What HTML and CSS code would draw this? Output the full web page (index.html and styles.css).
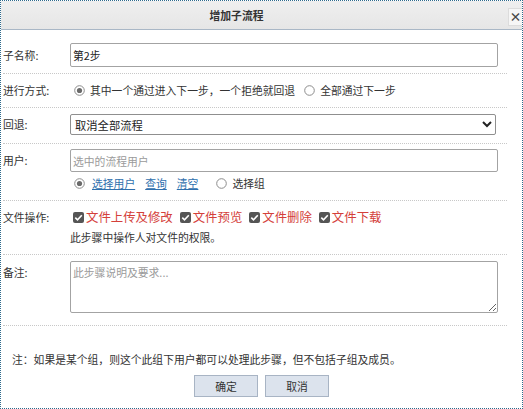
FILE: index.html
```html
<!DOCTYPE html>
<html lang="zh-CN">
<head>
<meta charset="utf-8">
<title>增加子流程</title>
<link rel="stylesheet" href="styles.css">
</head>
<body>
<div class="dialog">
  <div class="header">
    <span class="title">增加子流程</span>
    <span class="close">×</span>
  </div>
  <div class="form">
    <div class="row r1">
      <div class="label l24">子名称:</div>
      <div class="field"><input class="text" type="text" value="第2步"></div>
    </div>
    <div class="row r2">
      <div class="label l16">进行方式:</div>
      <div class="field line">
        <span class="opt"><svg class="radio" width="11" height="11" viewBox="0 0 11 11"><circle cx="5.5" cy="5.5" r="4.8" fill="#fff" stroke="#8c8c8c" stroke-width="1"/><circle cx="5.5" cy="5.5" r="2.6" fill="#6a6a6a"/></svg>其中一个通过进入下一步，一个拒绝就回退</span>
        <span class="opt"><svg class="radio" width="11" height="11" viewBox="0 0 11 11"><circle cx="5.5" cy="5.5" r="4.8" fill="#fff" stroke="#8c8c8c" stroke-width="1"/></svg>全部通过下一步</span>
      </div>
    </div>
    <div class="row r3">
      <div class="label l21">回退:</div>
      <div class="field"><select class="select"><option>取消全部流程</option></select></div>
    </div>
    <div class="row r4">
      <div class="label l23">用户:</div>
      <div class="field">
        <input class="text" type="text" placeholder="选中的流程用户">
        <div class="line sub">
          <svg class="radio first" width="11" height="11" viewBox="0 0 11 11"><circle cx="5.5" cy="5.5" r="4.8" fill="#fff" stroke="#8c8c8c" stroke-width="1"/><circle cx="5.5" cy="5.5" r="2.6" fill="#6a6a6a"/></svg>
          <a class="link" href="#">选择用户</a>
          <a class="link" href="#">查询</a>
          <a class="link" href="#">清空</a>
          <span class="opt grp"><svg class="radio" width="11" height="11" viewBox="0 0 11 11"><circle cx="5.5" cy="5.5" r="4.8" fill="#fff" stroke="#8c8c8c" stroke-width="1"/></svg>选择组</span>
        </div>
      </div>
    </div>
    <div class="row r5">
      <div class="label l16">文件操作:</div>
      <div class="field">
        <div class="line checks">
          <span class="chk"><svg class="box" width="11" height="11" viewBox="0 0 11 11"><rect x="0" y="0" width="11" height="11" rx="2" fill="#555"/><path d="M2.3 5.6 L4.5 7.8 L8.8 3.2" fill="none" stroke="#fff" stroke-width="1.6"/></svg>文件上传及修改</span>
          <span class="chk"><svg class="box" width="11" height="11" viewBox="0 0 11 11"><rect x="0" y="0" width="11" height="11" rx="2" fill="#555"/><path d="M2.3 5.6 L4.5 7.8 L8.8 3.2" fill="none" stroke="#fff" stroke-width="1.6"/></svg>文件预览</span>
          <span class="chk"><svg class="box" width="11" height="11" viewBox="0 0 11 11"><rect x="0" y="0" width="11" height="11" rx="2" fill="#555"/><path d="M2.3 5.6 L4.5 7.8 L8.8 3.2" fill="none" stroke="#fff" stroke-width="1.6"/></svg>文件删除</span>
          <span class="chk"><svg class="box" width="11" height="11" viewBox="0 0 11 11"><rect x="0" y="0" width="11" height="11" rx="2" fill="#555"/><path d="M2.3 5.6 L4.5 7.8 L8.8 3.2" fill="none" stroke="#fff" stroke-width="1.6"/></svg>文件下载</span>
        </div>
        <div class="hint">此步骤中操作人对文件的权限。</div>
      </div>
    </div>
    <div class="row r6">
      <div class="label l16 lmemo">备注:</div>
      <div class="field"><textarea class="memo" placeholder="此步骤说明及要求..."></textarea></div>
    </div>
  </div>
  <div class="note">注：如果是某个组，则这个此组下用户都可以处理此步骤，但不包括子组及成员。</div>
  <div class="buttons">
    <button class="btn">确定</button>
    <button class="btn">取消</button>
  </div>
</div>
</body>
</html>
```
FILE: styles.css
```css
* { box-sizing: border-box; }
html, body { margin: 0; padding: 0; background: #fff; }
body {
  font-family: "Noto Sans CJK SC", "Noto Sans", sans-serif;
  font-size: 10.8px;
  color: #333;
}
.dialog {
  position: relative;
  width: 523px;
  height: 409px;
  border: 1px dotted #2f6a8c;
  display: flex;
  flex-direction: column;
}
.header {
  height: 29px;
  background: linear-gradient(#efefef, #e6e6e6);
  border-bottom: 1px solid #a9b7c6;
  display: flex;
  align-items: center;
  justify-content: center;
  padding-right: 50px;
  flex-shrink: 0;
}
.title {
  font-weight: bold;
  font-size: 10.8px;
  color: #333;
}
.close {
  position: absolute;
  right: 0;
  top: 7px;
  width: 14px;
  height: 18px;
  background: #f6f6f6;
  border: 1px solid #dcdcdc;
  border-right: none;
  font-size: 12px;
  font-weight: bold;
  line-height: 16px;
  text-align: center;
  color: #444;
}
.form {
  padding: 0 15px 0 2px;
}
.row {
  display: grid;
  grid-template-columns: 67px 1fr;
  border-bottom: 1px dotted #c8c8c8;
}
.r1 { padding: 13px 0 6px; }
.r2 { padding: 8px 0 9px; }
.r3 { padding: 6px 0 8px; }
.r4 { padding: 5px 0 10px; }
.r5 { padding: 8px 0 10px; }
.r6 { padding: 6px 0 12px; }
.label { white-space: nowrap; color: #333; }
.l24 { line-height: 24px; }
.l21 { line-height: 21px; }
.l23 { line-height: 23px; }
.l16 { line-height: 16px; }
.lmemo { padding-top: 3px; }
.field { display: flex; flex-direction: column; align-items: flex-start; }
.line {
  display: flex;
  flex-direction: row;
  align-items: center;
  height: 16px;
  white-space: nowrap;
}
.opt { display: inline-flex; align-items: center; }
.r2 .field { padding-left: 4px; }
.r2 .opt + .opt { margin-left: 9px; }
.radio { margin-right: 5px; flex-shrink: 0; }
.text {
  width: 428px;
  height: 24px;
  border: 1px solid #a3a3a3;
  border-radius: 2px;
  padding: 0 2px;
  font-family: inherit;
  font-size: 10.8px;
  color: #222;
  outline: none;
}
.r4 .text { height: 23px; }
.text::placeholder, .memo::placeholder { color: #9a9a9a; }
.select {
  width: 426px;
  height: 21px;
  border: 1px solid #8f8f8f;
  border-radius: 2px;
  font-family: inherit;
  font-size: 11.3px;
  color: #222;
  background: #fff;
  padding: 0;
}
.sub {
  margin-top: 4px;
  height: 14px;
  padding-left: 4px;
}
.sub .first { margin-right: 7px; }
.link {
  color: #2f6fad;
  text-decoration: underline;
  margin-right: 10px;
}
.grp { margin-left: 8px; }
.checks { padding-left: 3px; }
.chk {
  display: inline-flex;
  align-items: center;
  color: #d4403a;
  font-size: 12.4px;
  margin-right: 7px;
}
.box { margin-right: 2px; flex-shrink: 0; }
.hint {
  margin-top: 5px;
  line-height: 14px;
  color: #333;
}
.memo {
  width: 428px;
  height: 52px;
  border: 1px solid #a3a3a3;
  border-radius: 2px;
  padding: 2px;
  font-family: inherit;
  font-size: 10.8px;
  resize: vertical;
  display: block;
}
.note {
  margin-top: 25px;
  padding-left: 11px;
  line-height: 16px;
  color: #333;
}
.buttons {
  display: flex;
  justify-content: center;
  gap: 7px;
  margin-top: 8px;
}
.btn {
  width: 64px;
  height: 22px;
  background: #dce3ed;
  border: 1px solid #a8b4c4;
  border-radius: 0;
  font-family: inherit;
  font-size: 10.8px;
  color: #333;
  padding: 0;
}
```
